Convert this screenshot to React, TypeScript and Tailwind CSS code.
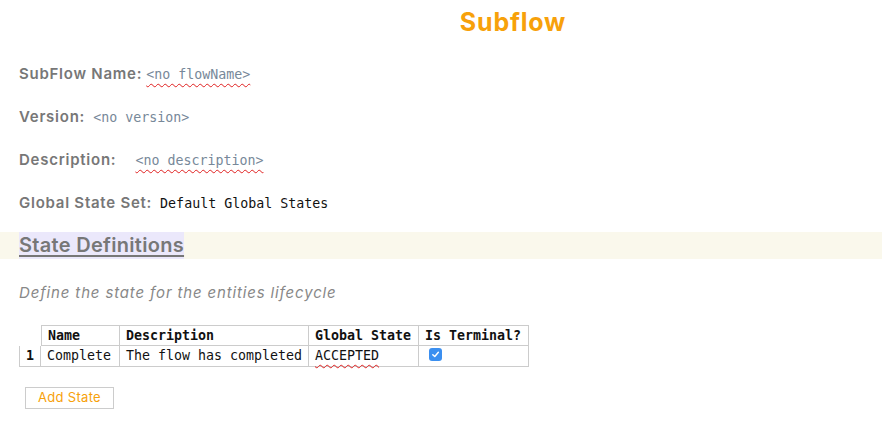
import React from "react";

const sans = { fontFamily: "Inter, 'Open Sans', sans-serif" };
const mono = { fontFamily: "'DejaVu Sans Mono', 'Liberation Mono', monospace" };

function Row({ label, children }: { label: string; children: React.ReactNode }) {
  return (
    <div className="flex items-baseline h-[43px]">
      <span className="text-[15px] font-semibold text-[#777] tracking-[0.75px]" style={sans}>{label}</span>
      {children}
    </div>
  );
}

const spell = "underline decoration-wavy decoration-[#e02020] decoration-1 underline-offset-[4px]";
const cell = "box-border h-[21px] border-r border-b border-[#ccc] px-[6px] flex items-center whitespace-nowrap";

export default function App() {
  return (
    <div className="w-[882px] h-[425px] bg-white overflow-hidden relative">
      <div className="pt-[6px] pl-[144px] text-center">
        <h1 className="text-[25px] font-bold text-[#f7a10a] leading-[32px] tracking-[0.8px]" style={sans}>Subflow</h1>
      </div>
      <div className="pl-[19px] pt-[25px]">
        <Row label="SubFlow Name:">
          <span className={"ml-[4px] text-[13.3px] text-[#778899] " + spell} style={mono}>&lt;no flowName&gt;</span>
        </Row>
        <Row label="Version:">
          <span className="ml-[8px] text-[13.3px] text-[#778899]" style={mono}>&lt;no version&gt;</span>
        </Row>
        <Row label="Description:">
          <span className={"ml-[19px] text-[13.3px] text-[#778899] " + spell} style={mono}>&lt;no description&gt;</span>
        </Row>
        <Row label="Global State Set:">
          <span className="ml-[8px] text-[13.3px] text-[#111]" style={mono}>Default Global States</span>
        </Row>
      </div>
      <div className="-mt-[3px] h-[27px] bg-[#faf8ec] pl-[19px] flex items-stretch">
        <span className="bg-[#ebe8fb] text-[20px] font-semibold text-[#777] underline underline-offset-[3px] leading-[27px] tracking-[0.3px]" style={sans}>State Definitions</span>
      </div>
      <p className="pl-[19px] mt-[24px] text-[15px] italic text-[#888] leading-[20px] tracking-[0.85px]" style={sans}>Define the state for the entities lifecycle</p>
      <div className="pl-[19px] mt-[22px] text-[13.3px] text-[#111]" style={mono}>
        <div className="flex">
          <div className="w-[22px] h-[21px]" />
          <div className={cell + " w-[79px] border-l border-t font-bold"}>Name</div>
          <div className={cell + " w-[189px] border-t font-bold"}>Description</div>
          <div className={cell + " w-[110px] border-t font-bold"}>Global State</div>
          <div className={cell + " w-[110px] border-t font-bold"}>Is Terminal?</div>
        </div>
        <div className="flex">
          <div className={cell + " w-[22px] border-l justify-center px-0 font-bold"}>1</div>
          <div className={cell + " w-[79px]"}>Complete</div>
          <div className={cell + " w-[189px]"}>The flow has completed</div>
          <div className={cell + " w-[110px]"}><span className={spell}>ACCEPTED</span></div>
          <div className={cell + " w-[110px] px-[10px]"}>
            <span className="inline-flex w-[13px] h-[13px] rounded-[3px] bg-[#3b8ff0] items-center justify-center -mt-[3px]">
              <svg width="9" height="9" viewBox="0 0 10 10"><path d="M2 5.2 L4.2 7.3 L8.2 2.6" stroke="white" strokeWidth="1.6" fill="none" strokeLinecap="round" strokeLinejoin="round" /></svg>
            </span>
          </div>
        </div>
      </div>
      <div className="pl-[25px] mt-[17px]">
        <button className="w-[89px] h-[22px] border border-[#ccc] bg-white text-[13px] text-[#f7a10a] tracking-[0.3px]" style={sans}>Add State</button>
      </div>
    </div>
  );
}
